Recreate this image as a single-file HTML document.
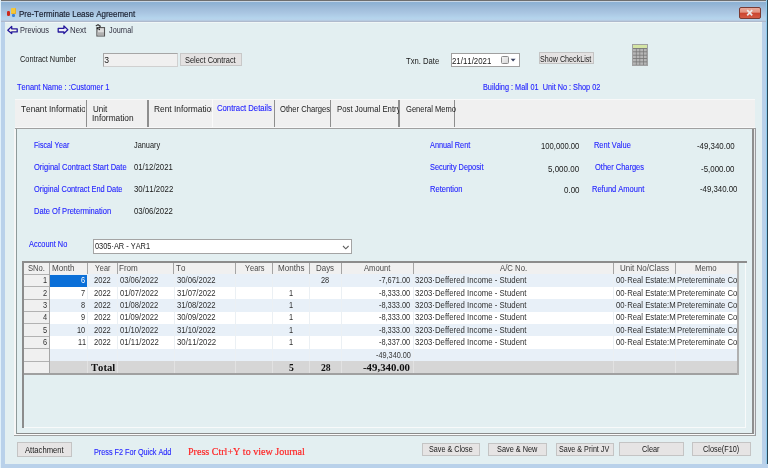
<!DOCTYPE html>
<html><head><meta charset="utf-8"><style>
html,body{margin:0;padding:0;width:768px;height:468px;overflow:hidden;background:#e3eff1}
body{position:relative;font-family:"Liberation Sans",sans-serif;font-variant-ligatures:none;font-kerning:none}
div{box-sizing:border-box}
</style></head><body>
<div style="position:absolute;left:0px;top:0px;width:768px;height:468px;background:#b9d1ea"></div>
<div style="position:absolute;left:0px;top:0px;width:768px;height:1px;background:#6e6e6e"></div>
<div style="position:absolute;left:0px;top:1px;width:768px;height:21px;background:linear-gradient(#c8d6e4 0px,#c8d6e4 1px,#8db1d4 1px,#90b3d4 3px,#9cbad8 6px,#aac6e2 12px,#b4d4ec 17px,#b8d2ea 19px,#b4c2d6 20px,#aab2c4 21px)"></div>
<div style="position:absolute;left:5px;top:22px;width:757px;height:442px;background:#e3eff1"></div>
<div style="position:absolute;left:5px;top:22px;width:757px;height:1px;background:#f0f6f6"></div>
<div style="position:absolute;left:766px;top:0px;width:1px;height:468px;background:#90ccee"></div>
<div style="position:absolute;left:767px;top:0px;width:1px;height:468px;background:#2a4858"></div>
<div style="position:absolute;left:0px;top:464px;width:768px;height:4px;background:#b9d1ea"></div>
<div style="position:absolute;left:0px;top:0px;width:1px;height:468px;background:#e0f0fa"></div>
<div style="position:absolute;left:7px;top:11px;width:3px;height:4.5px;background:#cc2a1c;border-radius:1.2px"></div>
<div style="position:absolute;left:10.5px;top:8.2px;width:5.5px;height:5.6px;background:#f4c83a;border-radius:1px;box-shadow:inset -0.6px -0.6px 0 #e0a020"></div>
<div style="position:absolute;left:11.5px;top:14.3px;width:3.2px;height:2.9px;background:#3a80d8;border-radius:1.2px"></div>
<div style="position:absolute;left:739.2px;top:7px;width:21.6px;height:12px;border:1px solid #7a3a32;border-radius:2px;background:linear-gradient(#eaa898 0%,#e29482 40%,#cc4630 55%,#d45a44 100%)"></div>
<svg style="position:absolute;left:744px;top:8px" width="12" height="10"><path d="M3.2 2.2 L8.2 7.4 M8.2 2.2 L3.2 7.4" stroke="#ece8e8" stroke-width="1.7" stroke-linecap="butt"/></svg>
<svg style="position:absolute;left:4px;top:22px" width="16" height="16"><path d="M3.8 8.2 L7.7 4.4 L7.7 6.8 L13.2 6.8 L13.2 9.9 L7.7 9.9 L7.7 11.6 Z" fill="#f6f6e6" stroke="#24189c" stroke-width="1.3" stroke-linejoin="round"/></svg>
<svg style="position:absolute;left:54px;top:22px" width="16" height="16"><path d="M13.8 7.7 L9.9 3.9 L9.9 6.4 L4.2 6.4 L4.2 10 L9.9 10 L9.9 11.6 Z" fill="#eeeef6" stroke="#24189c" stroke-width="1.3" stroke-linejoin="round"/></svg>
<svg style="position:absolute;left:92px;top:22px" width="16" height="16"><rect x="4.9" y="5.6" width="7.6" height="8.4" fill="#dcdcdc" stroke="#555555" stroke-width="1.1"/><rect x="5.5" y="10.3" width="6.5" height="3.2" fill="#b0b0b0"/><path d="M3.8 4 L6 2.8 L8.8 4.6" fill="none" stroke="#3a3a3a" stroke-width="1.2"/><circle cx="5.6" cy="6.4" r="0.9" fill="#222"/><circle cx="7.4" cy="5.3" r="0.8" fill="#222"/><circle cx="7.3" cy="7.4" r="0.8" fill="#222"/></svg>
<div style="position:absolute;left:103px;top:53px;width:75px;height:14px;background:#f0f0f0;border:1px solid #a6a6a6;border-right-color:#d0d0d0;border-bottom-color:#d0d0d0"></div>
<div style="position:absolute;left:179.6px;top:53.2px;width:62.1px;height:12.5px;background:#e4e2e2;border:1px solid #c8c8c8"></div>
<div style="position:absolute;left:451px;top:53px;width:69px;height:14px;background:#ffffff;border:1px solid #a0a0a0"></div>
<div style="position:absolute;left:501.2px;top:55.7px;width:7.5px;height:8px;background:linear-gradient(135deg,#f4f4f4,#d8d8d8);border:1px solid #8a8a8a;border-radius:1.5px"></div>
<svg style="position:absolute;left:510px;top:57.5px" width="7" height="5"><path d="M0.6 0.8 H5.6 L3.1 3.6 Z" fill="#3a4260"/></svg>
<div style="position:absolute;left:538.6px;top:51.9px;width:55px;height:12.4px;background:#e4e2e2;border:1px solid #c4c4c4"></div>
<svg style="position:absolute;left:632px;top:43.5px" width="16" height="22"><rect x="0.4" y="0.4" width="15.2" height="21.2" fill="#787878" stroke="#a0a0a0" stroke-width="0.8"/><rect x="1" y="1" width="14" height="3" fill="#d4e4a4"/><rect x="1.0" y="4.90" width="2.9" height="2.5" fill="#b6b6b6"/><rect x="4.6" y="4.90" width="2.9" height="2.5" fill="#b6b6b6"/><rect x="8.2" y="4.90" width="2.9" height="2.5" fill="#b6b6b6"/><rect x="11.8" y="4.90" width="2.9" height="2.5" fill="#b6b6b6"/><rect x="1.0" y="8.25" width="2.9" height="2.5" fill="#b6b6b6"/><rect x="4.6" y="8.25" width="2.9" height="2.5" fill="#b6b6b6"/><rect x="8.2" y="8.25" width="2.9" height="2.5" fill="#b6b6b6"/><rect x="11.8" y="8.25" width="2.9" height="2.5" fill="#b6b6b6"/><rect x="1.0" y="11.60" width="2.9" height="2.5" fill="#b6b6b6"/><rect x="4.6" y="11.60" width="2.9" height="2.5" fill="#b6b6b6"/><rect x="8.2" y="11.60" width="2.9" height="2.5" fill="#b6b6b6"/><rect x="11.8" y="11.60" width="2.9" height="2.5" fill="#b6b6b6"/><rect x="1.0" y="14.95" width="2.9" height="2.5" fill="#b6b6b6"/><rect x="4.6" y="14.95" width="2.9" height="2.5" fill="#b6b6b6"/><rect x="8.2" y="14.95" width="2.9" height="2.5" fill="#b6b6b6"/><rect x="11.8" y="14.95" width="2.9" height="2.5" fill="#b6b6b6"/><rect x="1.0" y="18.30" width="2.9" height="2.5" fill="#b6b6b6"/><rect x="4.6" y="18.30" width="2.9" height="2.5" fill="#b6b6b6"/><rect x="8.2" y="18.30" width="2.9" height="2.5" fill="#b6b6b6"/><rect x="11.8" y="18.30" width="2.9" height="2.5" fill="#b6b6b6"/></svg>
<div style="position:absolute;left:14.5px;top:98.5px;width:740px;height:29.5px;background:#f0f0f0"></div>
<div style="position:absolute;left:14.5px;top:98.5px;width:740px;height:1px;background:#f8f8f8"></div>
<div style="position:absolute;left:85.5px;top:99.5px;width:1.3px;height:28px;background:#8e8e8e"></div>
<div style="position:absolute;left:147.3px;top:99.5px;width:1.3px;height:28px;background:#8e8e8e"></div>
<div style="position:absolute;left:274.2px;top:99.5px;width:1.3px;height:28px;background:#8e8e8e"></div>
<div style="position:absolute;left:330.2px;top:99.5px;width:1.3px;height:28px;background:#8e8e8e"></div>
<div style="position:absolute;left:398.3px;top:99.5px;width:1.3px;height:28px;background:#8e8e8e"></div>
<div style="position:absolute;left:453.8px;top:99.5px;width:1.3px;height:28px;background:#8e8e8e"></div>
<div style="position:absolute;left:212px;top:99px;width:1px;height:28px;background:#fafafa"></div>
<div style="position:absolute;left:14.5px;top:126.6px;width:740px;height:1px;background:#f8f8f8"></div>
<div style="position:absolute;left:14.5px;top:127.6px;width:741px;height:1.6px;background:linear-gradient(#909090,#b0b0b0)"></div>
<div style="position:absolute;left:15.6px;top:129px;width:1.3px;height:306px;background:#8e9a9a"></div>
<div style="position:absolute;left:14px;top:129px;width:1.6px;height:306px;background:#f6f6f6"></div>
<div style="position:absolute;left:752px;top:129px;width:1.5px;height:304px;background:#8e8e8e"></div>
<div style="position:absolute;left:753.5px;top:129px;width:1.3px;height:304px;background:#e8e8e8"></div>
<div style="position:absolute;left:754.8px;top:128px;width:1.3px;height:307.5px;background:#9a9a9e"></div>
<div style="position:absolute;left:16.7px;top:432.5px;width:737px;height:1.2px;background:#8a8a8a"></div>
<div style="position:absolute;left:14px;top:435px;width:742px;height:1.3px;background:#a0a0a0"></div>
<div style="position:absolute;left:14px;top:433.8px;width:740px;height:1px;background:#fafafa"></div>
<div style="position:absolute;left:93.3px;top:239.2px;width:258.5px;height:15px;background:#ffffff;border:1px solid #a4a4a4"></div>
<svg style="position:absolute;left:342px;top:244.5px" width="8" height="5"><path d="M1 1 L3.8 3.8 L6.6 1" fill="none" stroke="#606060" stroke-width="1.1"/></svg>
<div style="position:absolute;left:22.3px;top:261.2px;width:723.7px;height:167.10000000000002px;background:#e3eff1;border-right:1px solid #f8fafa;border-bottom:1.2px solid #f8fafa"></div>
<div style="position:absolute;left:22.3px;top:261.2px;width:724.7px;height:1.8px;background:#8c8c8c"></div>
<div style="position:absolute;left:22.3px;top:261.2px;width:1.5px;height:167.10000000000002px;background:#8c8c8c"></div>
<div style="position:absolute;left:23.8px;top:263px;width:713.4000000000001px;height:11.300000000000011px;background:#f0f0f0"></div>
<div style="position:absolute;left:23.8px;top:273.6px;width:713.4000000000001px;height:1.1px;background:#a8a8a8"></div>
<div style="position:absolute;left:49.1px;top:263px;width:1.1px;height:11.300000000000011px;background:#a4a4a4"></div>
<div style="position:absolute;left:86.7px;top:263px;width:1.1px;height:11.300000000000011px;background:#a4a4a4"></div>
<div style="position:absolute;left:116.7px;top:263px;width:1.1px;height:11.300000000000011px;background:#a4a4a4"></div>
<div style="position:absolute;left:173.4px;top:263px;width:1.1px;height:11.300000000000011px;background:#a4a4a4"></div>
<div style="position:absolute;left:234.70000000000002px;top:263px;width:1.1px;height:11.300000000000011px;background:#a4a4a4"></div>
<div style="position:absolute;left:271.9px;top:263px;width:1.1px;height:11.300000000000011px;background:#a4a4a4"></div>
<div style="position:absolute;left:308.7px;top:263px;width:1.1px;height:11.300000000000011px;background:#a4a4a4"></div>
<div style="position:absolute;left:341.29999999999995px;top:263px;width:1.1px;height:11.300000000000011px;background:#a4a4a4"></div>
<div style="position:absolute;left:412.7px;top:263px;width:1.1px;height:11.300000000000011px;background:#a4a4a4"></div>
<div style="position:absolute;left:612.6px;top:263px;width:1.1px;height:11.300000000000011px;background:#a4a4a4"></div>
<div style="position:absolute;left:675.1px;top:263px;width:1.1px;height:11.300000000000011px;background:#a4a4a4"></div>
<div style="position:absolute;left:736.6px;top:263px;width:1.1px;height:11.300000000000011px;background:#a4a4a4"></div>
<div style="position:absolute;left:737.2px;top:263px;width:1.6px;height:111.5px;background:#b0b0b0"></div>
<div style="position:absolute;left:49.7px;top:274.3px;width:687.5px;height:12.42px;background:#e8f0f8"></div>
<div style="position:absolute;left:49.7px;top:286.72px;width:687.5px;height:12.42px;background:#ffffff"></div>
<div style="position:absolute;left:49.7px;top:299.14px;width:687.5px;height:12.42px;background:#e8f0f8"></div>
<div style="position:absolute;left:49.7px;top:311.56px;width:687.5px;height:12.42px;background:#ffffff"></div>
<div style="position:absolute;left:49.7px;top:323.98px;width:687.5px;height:12.42px;background:#e8f0f8"></div>
<div style="position:absolute;left:49.7px;top:336.40000000000003px;width:687.5px;height:12.42px;background:#ffffff"></div>
<div style="position:absolute;left:49.7px;top:348.82px;width:687.5px;height:12.42px;background:#e8f0f8"></div>
<div style="position:absolute;left:86.8px;top:274.3px;width:1px;height:86.94px;background:#ebf0f4"></div>
<div style="position:absolute;left:116.8px;top:274.3px;width:1px;height:86.94px;background:#ebf0f4"></div>
<div style="position:absolute;left:173.5px;top:274.3px;width:1px;height:86.94px;background:#ebf0f4"></div>
<div style="position:absolute;left:234.8px;top:274.3px;width:1px;height:86.94px;background:#ebf0f4"></div>
<div style="position:absolute;left:272.0px;top:274.3px;width:1px;height:86.94px;background:#ebf0f4"></div>
<div style="position:absolute;left:308.8px;top:274.3px;width:1px;height:86.94px;background:#ebf0f4"></div>
<div style="position:absolute;left:341.4px;top:274.3px;width:1px;height:86.94px;background:#ebf0f4"></div>
<div style="position:absolute;left:412.8px;top:274.3px;width:1px;height:86.94px;background:#ebf0f4"></div>
<div style="position:absolute;left:612.7px;top:274.3px;width:1px;height:86.94px;background:#ebf0f4"></div>
<div style="position:absolute;left:675.2px;top:274.3px;width:1px;height:86.94px;background:#ebf0f4"></div>
<div style="position:absolute;left:49.7px;top:361.24px;width:687.5px;height:12.360000000000014px;background:#d6d6d6"></div>
<div style="position:absolute;left:86.8px;top:361.24px;width:1px;height:12.360000000000014px;background:#e2e2e2"></div>
<div style="position:absolute;left:116.8px;top:361.24px;width:1px;height:12.360000000000014px;background:#e2e2e2"></div>
<div style="position:absolute;left:173.5px;top:361.24px;width:1px;height:12.360000000000014px;background:#e2e2e2"></div>
<div style="position:absolute;left:234.8px;top:361.24px;width:1px;height:12.360000000000014px;background:#e2e2e2"></div>
<div style="position:absolute;left:272.0px;top:361.24px;width:1px;height:12.360000000000014px;background:#e2e2e2"></div>
<div style="position:absolute;left:308.8px;top:361.24px;width:1px;height:12.360000000000014px;background:#e2e2e2"></div>
<div style="position:absolute;left:341.4px;top:361.24px;width:1px;height:12.360000000000014px;background:#e2e2e2"></div>
<div style="position:absolute;left:412.8px;top:361.24px;width:1px;height:12.360000000000014px;background:#e2e2e2"></div>
<div style="position:absolute;left:612.7px;top:361.24px;width:1px;height:12.360000000000014px;background:#e2e2e2"></div>
<div style="position:absolute;left:675.2px;top:361.24px;width:1px;height:12.360000000000014px;background:#e2e2e2"></div>
<div style="position:absolute;left:23.5px;top:274.3px;width:26.200000000000003px;height:99.30000000000001px;background:#f0f0f0"></div>
<div style="position:absolute;left:23.5px;top:273.7px;width:26.200000000000003px;height:1.1px;background:#b2b2b2"></div>
<div style="position:absolute;left:23.5px;top:286.12px;width:26.200000000000003px;height:1.1px;background:#b2b2b2"></div>
<div style="position:absolute;left:23.5px;top:298.53999999999996px;width:26.200000000000003px;height:1.1px;background:#b2b2b2"></div>
<div style="position:absolute;left:23.5px;top:310.96px;width:26.200000000000003px;height:1.1px;background:#b2b2b2"></div>
<div style="position:absolute;left:23.5px;top:323.38px;width:26.200000000000003px;height:1.1px;background:#b2b2b2"></div>
<div style="position:absolute;left:23.5px;top:335.8px;width:26.200000000000003px;height:1.1px;background:#b2b2b2"></div>
<div style="position:absolute;left:23.5px;top:348.21999999999997px;width:26.200000000000003px;height:1.1px;background:#b2b2b2"></div>
<div style="position:absolute;left:23.5px;top:360.64px;width:26.200000000000003px;height:1.1px;background:#b2b2b2"></div>
<div style="position:absolute;left:23.5px;top:373.06px;width:26.200000000000003px;height:1.1px;background:#b2b2b2"></div>
<div style="position:absolute;left:48.6px;top:263px;width:1.3px;height:110.60000000000002px;background:#a6a6a6"></div>
<div style="position:absolute;left:23.5px;top:373.2px;width:713.7px;height:1.4px;background:#a0a0a0"></div>
<div style="position:absolute;left:50px;top:274.8px;width:37.1px;height:11.8px;background:#0a6fd8"></div>
<div style="position:absolute;left:17.3px;top:442.3px;width:55.2px;height:15.199999999999989px;background:#e6e4e4;border:1px solid #c4c4c4"></div>
<div style="position:absolute;left:421.8px;top:442.7px;width:58.69999999999999px;height:13.300000000000011px;background:#e6e4e4;border:1px solid #c4c4c4"></div>
<div style="position:absolute;left:487.9px;top:442.7px;width:58.80000000000007px;height:13.300000000000011px;background:#e6e4e4;border:1px solid #c4c4c4"></div>
<div style="position:absolute;left:555.5px;top:442.7px;width:58.5px;height:13.300000000000011px;background:#e6e4e4;border:1px solid #c4c4c4"></div>
<div style="position:absolute;left:619.4px;top:442.4px;width:64.39999999999998px;height:13.600000000000023px;background:#e6e4e4;border:1px solid #c4c4c4"></div>
<div style="position:absolute;left:692px;top:441.9px;width:58.799999999999955px;height:13.900000000000034px;background:#e6e4e4;border:1px solid #c4c4c4"></div>
<div style="position:absolute;left:0;top:0;width:768px;height:468px;will-change:transform">
<div style="position:absolute;left:19.61px;top:26.00px;font:normal 8.6px/8.6px 'Liberation Sans',serif;color:#303040;white-space:pre;font-variant-ligatures:none;font-kerning:none;;transform:scaleX(0.8643);transform-origin:0 0">Previous</div>
<div style="position:absolute;left:70.37px;top:26.00px;font:normal 8.6px/8.6px 'Liberation Sans',serif;color:#303040;white-space:pre;font-variant-ligatures:none;font-kerning:none;;transform:scaleX(0.9169);transform-origin:0 0">Next</div>
<div style="position:absolute;left:109.33px;top:26.00px;font:normal 8.6px/8.6px 'Liberation Sans',serif;color:#303040;white-space:pre;font-variant-ligatures:none;font-kerning:none;;transform:scaleX(0.8446);transform-origin:0 0">Journal</div>
<div style="position:absolute;left:19.36px;top:9.00px;font:normal 9.4px/9.4px 'Liberation Sans',serif;color:#1a2030;white-space:pre;font-variant-ligatures:none;font-kerning:none;-webkit-text-stroke:0.2px #1a2030;transform:scaleX(0.8511);transform-origin:0 0">Pre-Terminate Lease Agreement</div>
<div style="position:absolute;left:19.93px;top:55.00px;font:normal 8.6px/8.6px 'Liberation Sans',serif;color:#202020;white-space:pre;font-variant-ligatures:none;font-kerning:none;;transform:scaleX(0.8562);transform-origin:0 0">Contract Number</div>
<div style="position:absolute;left:104.34px;top:56.00px;font:normal 8.6px/8.6px 'Liberation Sans',serif;color:#202020;white-space:pre;font-variant-ligatures:none;font-kerning:none;;transform:scaleX(1.0000);transform-origin:0 0">3</div>
<div style="position:absolute;left:184.50px;top:56.00px;font:normal 8.6px/8.6px 'Liberation Sans',serif;color:#202020;white-space:pre;font-variant-ligatures:none;font-kerning:none;;transform:scaleX(0.8620);transform-origin:0 0">Select Contract</div>
<div style="position:absolute;left:406.05px;top:57.00px;font:normal 8.6px/8.6px 'Liberation Sans',serif;color:#202020;white-space:pre;font-variant-ligatures:none;font-kerning:none;;transform:scaleX(0.8914);transform-origin:0 0">Txn. Date</div>
<div style="position:absolute;left:452.21px;top:57.00px;font:normal 8.6px/8.6px 'Liberation Sans',serif;color:#202020;white-space:pre;font-variant-ligatures:none;font-kerning:none;;transform:scaleX(0.9140);transform-origin:0 0">21/11/2021</div>
<div style="position:absolute;left:540.31px;top:55.00px;font:normal 8.6px/8.6px 'Liberation Sans',serif;color:#202020;white-space:pre;font-variant-ligatures:none;font-kerning:none;;transform:scaleX(0.8331);transform-origin:0 0">Show CheckList</div>
<div style="position:absolute;left:17.35px;top:83.00px;font:normal 8.6px/8.6px 'Liberation Sans',serif;color:#2424ff;white-space:pre;font-variant-ligatures:none;font-kerning:none;-webkit-text-stroke:0.12px #2424ff;;transform:scaleX(0.8725);transform-origin:0 0">Tenant Name : :Customer 1</div>
<div style="position:absolute;left:482.92px;top:83.00px;font:normal 8.6px/8.6px 'Liberation Sans',serif;color:#2424ff;white-space:pre;font-variant-ligatures:none;font-kerning:none;-webkit-text-stroke:0.12px #2424ff;;transform:scaleX(0.8499);transform-origin:0 0">Building : Mall 01  Unit No : Shop 02</div>
<div style="position:absolute;left:15px;top:0;width:70.2px;height:468px;overflow:hidden"><div style="position:absolute;left:-15px;top:0"><div style="position:absolute;left:20.83px;top:105.00px;font:normal 8.6px/8.6px 'Liberation Sans',serif;color:#202020;white-space:pre;font-variant-ligatures:none;font-kerning:none;;transform:scaleX(0.9626);transform-origin:0 0">Tenant Information</div></div></div>
<div style="position:absolute;left:92.64px;top:105.00px;font:normal 8.6px/8.6px 'Liberation Sans',serif;color:#202020;white-space:pre;font-variant-ligatures:none;font-kerning:none;;transform:scaleX(0.9313);transform-origin:0 0">Unit</div>
<div style="position:absolute;left:92.45px;top:114.00px;font:normal 8.6px/8.6px 'Liberation Sans',serif;color:#202020;white-space:pre;font-variant-ligatures:none;font-kerning:none;;transform:scaleX(0.9673);transform-origin:0 0">Information</div>
<div style="position:absolute;left:149px;top:0;width:63px;height:468px;overflow:hidden"><div style="position:absolute;left:-149px;top:0"><div style="position:absolute;left:153.93px;top:105.00px;font:normal 8.6px/8.6px 'Liberation Sans',serif;color:#202020;white-space:pre;font-variant-ligatures:none;font-kerning:none;;transform:scaleX(0.9741);transform-origin:0 0">Rent Information</div></div></div>
<div style="position:absolute;left:216.51px;top:104.00px;font:normal 8.6px/8.6px 'Liberation Sans',serif;color:#2424ff;white-space:pre;font-variant-ligatures:none;font-kerning:none;-webkit-text-stroke:0.12px #2424ff;;transform:scaleX(0.8977);transform-origin:0 0">Contract Details</div>
<div style="position:absolute;left:280.09px;top:105.00px;font:normal 8.6px/8.6px 'Liberation Sans',serif;color:#202020;white-space:pre;font-variant-ligatures:none;font-kerning:none;;transform:scaleX(0.8871);transform-origin:0 0">Other Charges</div>
<div style="position:absolute;left:332px;top:0;width:66.60000000000002px;height:468px;overflow:hidden"><div style="position:absolute;left:-332px;top:0"><div style="position:absolute;left:337.08px;top:105.00px;font:normal 8.6px/8.6px 'Liberation Sans',serif;color:#202020;white-space:pre;font-variant-ligatures:none;font-kerning:none;;transform:scaleX(0.9054);transform-origin:0 0">Post Journal Entry</div></div></div>
<div style="position:absolute;left:406.22px;top:105.00px;font:normal 8.6px/8.6px 'Liberation Sans',serif;color:#202020;white-space:pre;font-variant-ligatures:none;font-kerning:none;;transform:scaleX(0.8800);transform-origin:0 0">General Memo</div>
<div style="position:absolute;left:34.44px;top:141.00px;font:normal 8.6px/8.6px 'Liberation Sans',serif;color:#2424ff;white-space:pre;font-variant-ligatures:none;font-kerning:none;-webkit-text-stroke:0.12px #2424ff;;transform:scaleX(0.8208);transform-origin:0 0">Fiscal Year</div>
<div style="position:absolute;left:34.30px;top:163.00px;font:normal 8.6px/8.6px 'Liberation Sans',serif;color:#2424ff;white-space:pre;font-variant-ligatures:none;font-kerning:none;-webkit-text-stroke:0.12px #2424ff;;transform:scaleX(0.8773);transform-origin:0 0">Original Contract Start Date</div>
<div style="position:absolute;left:34.30px;top:185.00px;font:normal 8.6px/8.6px 'Liberation Sans',serif;color:#2424ff;white-space:pre;font-variant-ligatures:none;font-kerning:none;-webkit-text-stroke:0.12px #2424ff;;transform:scaleX(0.8608);transform-origin:0 0">Original Contract End Date</div>
<div style="position:absolute;left:34.00px;top:207.00px;font:normal 8.6px/8.6px 'Liberation Sans',serif;color:#2424ff;white-space:pre;font-variant-ligatures:none;font-kerning:none;-webkit-text-stroke:0.12px #2424ff;;transform:scaleX(0.8781);transform-origin:0 0">Date Of Pretermination</div>
<div style="position:absolute;left:133.83px;top:141.00px;font:normal 8.6px/8.6px 'Liberation Sans',serif;color:#202020;white-space:pre;font-variant-ligatures:none;font-kerning:none;;transform:scaleX(0.8555);transform-origin:0 0">January</div>
<div style="position:absolute;left:133.67px;top:163.00px;font:normal 8.6px/8.6px 'Liberation Sans',serif;color:#202020;white-space:pre;font-variant-ligatures:none;font-kerning:none;;transform:scaleX(0.9012);transform-origin:0 0">01/12/2021</div>
<div style="position:absolute;left:133.66px;top:185.00px;font:normal 8.6px/8.6px 'Liberation Sans',serif;color:#202020;white-space:pre;font-variant-ligatures:none;font-kerning:none;;transform:scaleX(0.9150);transform-origin:0 0">30/11/2022</div>
<div style="position:absolute;left:133.67px;top:207.00px;font:normal 8.6px/8.6px 'Liberation Sans',serif;color:#202020;white-space:pre;font-variant-ligatures:none;font-kerning:none;;transform:scaleX(0.9012);transform-origin:0 0">03/06/2022</div>
<div style="position:absolute;left:430.20px;top:141.00px;font:normal 8.6px/8.6px 'Liberation Sans',serif;color:#2424ff;white-space:pre;font-variant-ligatures:none;font-kerning:none;-webkit-text-stroke:0.12px #2424ff;;transform:scaleX(0.8511);transform-origin:0 0">Annual Rent</div>
<div style="position:absolute;left:429.91px;top:163.00px;font:normal 8.6px/8.6px 'Liberation Sans',serif;color:#2424ff;white-space:pre;font-variant-ligatures:none;font-kerning:none;-webkit-text-stroke:0.12px #2424ff;;transform:scaleX(0.8557);transform-origin:0 0">Security Deposit</div>
<div style="position:absolute;left:429.59px;top:185.00px;font:normal 8.6px/8.6px 'Liberation Sans',serif;color:#2424ff;white-space:pre;font-variant-ligatures:none;font-kerning:none;-webkit-text-stroke:0.12px #2424ff;;transform:scaleX(0.8809);transform-origin:0 0">Retention</div>
<div style="position:absolute;left:540.76px;top:142.00px;font:normal 8.6px/8.6px 'Liberation Sans',serif;color:#202020;white-space:pre;font-variant-ligatures:none;font-kerning:none;;transform:scaleX(0.8925);transform-origin:0 0">100,000.00</div>
<div style="position:absolute;left:548.08px;top:165.00px;font:normal 8.6px/8.6px 'Liberation Sans',serif;color:#202020;white-space:pre;font-variant-ligatures:none;font-kerning:none;;transform:scaleX(0.9293);transform-origin:0 0">5,000.00</div>
<div style="position:absolute;left:563.66px;top:186.00px;font:normal 8.6px/8.6px 'Liberation Sans',serif;color:#202020;white-space:pre;font-variant-ligatures:none;font-kerning:none;;transform:scaleX(0.9277);transform-origin:0 0">0.00</div>
<div style="position:absolute;left:593.80px;top:141.00px;font:normal 8.6px/8.6px 'Liberation Sans',serif;color:#2424ff;white-space:pre;font-variant-ligatures:none;font-kerning:none;-webkit-text-stroke:0.12px #2424ff;;transform:scaleX(0.8652);transform-origin:0 0">Rent Value</div>
<div style="position:absolute;left:594.50px;top:163.00px;font:normal 8.6px/8.6px 'Liberation Sans',serif;color:#2424ff;white-space:pre;font-variant-ligatures:none;font-kerning:none;-webkit-text-stroke:0.12px #2424ff;;transform:scaleX(0.8691);transform-origin:0 0">Other Charges</div>
<div style="position:absolute;left:592.10px;top:185.00px;font:normal 8.6px/8.6px 'Liberation Sans',serif;color:#2424ff;white-space:pre;font-variant-ligatures:none;font-kerning:none;-webkit-text-stroke:0.12px #2424ff;;transform:scaleX(0.8749);transform-origin:0 0">Refund Amount</div>
<div style="position:absolute;left:697.18px;top:142.00px;font:normal 8.6px/8.6px 'Liberation Sans',serif;color:#202020;white-space:pre;font-variant-ligatures:none;font-kerning:none;;transform:scaleX(0.9168);transform-origin:0 0">-49,340.00</div>
<div style="position:absolute;left:701.38px;top:165.00px;font:normal 8.6px/8.6px 'Liberation Sans',serif;color:#202020;white-space:pre;font-variant-ligatures:none;font-kerning:none;;transform:scaleX(0.9220);transform-origin:0 0">-5,000.00</div>
<div style="position:absolute;left:700.29px;top:185.00px;font:normal 8.6px/8.6px 'Liberation Sans',serif;color:#202020;white-space:pre;font-variant-ligatures:none;font-kerning:none;;transform:scaleX(0.9118);transform-origin:0 0">-49,340.00</div>
<div style="position:absolute;left:29.00px;top:240.00px;font:normal 8.6px/8.6px 'Liberation Sans',serif;color:#2424ff;white-space:pre;font-variant-ligatures:none;font-kerning:none;-webkit-text-stroke:0.12px #2424ff;;transform:scaleX(0.8608);transform-origin:0 0">Account No</div>
<div style="position:absolute;left:94.98px;top:242.00px;font:normal 8.6px/8.6px 'Liberation Sans',serif;color:#202020;white-space:pre;font-variant-ligatures:none;font-kerning:none;;transform:scaleX(0.8600);transform-origin:0 0">0305·AR - YAR1</div>
<div style="position:absolute;left:28.09px;top:264.00px;font:normal 8.6px/8.6px 'Liberation Sans',serif;color:#4a4a4a;white-space:pre;font-variant-ligatures:none;font-kerning:none;;transform:scaleX(0.8879);transform-origin:0 0">SNo.</div>
<div style="position:absolute;left:51.85px;top:264.00px;font:normal 8.6px/8.6px 'Liberation Sans',serif;color:#4a4a4a;white-space:pre;font-variant-ligatures:none;font-kerning:none;;transform:scaleX(0.9458);transform-origin:0 0">Month</div>
<div style="position:absolute;left:94.85px;top:264.00px;font:normal 8.6px/8.6px 'Liberation Sans',serif;color:#4a4a4a;white-space:pre;font-variant-ligatures:none;font-kerning:none;;transform:scaleX(0.8483);transform-origin:0 0">Year</div>
<div style="position:absolute;left:119.15px;top:264.00px;font:normal 8.6px/8.6px 'Liberation Sans',serif;color:#4a4a4a;white-space:pre;font-variant-ligatures:none;font-kerning:none;;transform:scaleX(0.9398);transform-origin:0 0">From</div>
<div style="position:absolute;left:176.34px;top:264.00px;font:normal 8.6px/8.6px 'Liberation Sans',serif;color:#4a4a4a;white-space:pre;font-variant-ligatures:none;font-kerning:none;;transform:scaleX(0.9302);transform-origin:0 0">To</div>
<div style="position:absolute;left:244.75px;top:264.00px;font:normal 8.6px/8.6px 'Liberation Sans',serif;color:#4a4a4a;white-space:pre;font-variant-ligatures:none;font-kerning:none;;transform:scaleX(0.8707);transform-origin:0 0">Years</div>
<div style="position:absolute;left:277.75px;top:264.00px;font:normal 8.6px/8.6px 'Liberation Sans',serif;color:#4a4a4a;white-space:pre;font-variant-ligatures:none;font-kerning:none;;transform:scaleX(0.9429);transform-origin:0 0">Months</div>
<div style="position:absolute;left:315.87px;top:264.00px;font:normal 8.6px/8.6px 'Liberation Sans',serif;color:#4a4a4a;white-space:pre;font-variant-ligatures:none;font-kerning:none;;transform:scaleX(0.9224);transform-origin:0 0">Days</div>
<div style="position:absolute;left:364.30px;top:264.00px;font:normal 8.6px/8.6px 'Liberation Sans',serif;color:#4a4a4a;white-space:pre;font-variant-ligatures:none;font-kerning:none;;transform:scaleX(0.8902);transform-origin:0 0">Amount</div>
<div style="position:absolute;left:500.30px;top:264.00px;font:normal 8.6px/8.6px 'Liberation Sans',serif;color:#4a4a4a;white-space:pre;font-variant-ligatures:none;font-kerning:none;;transform:scaleX(0.9028);transform-origin:0 0">A/C No.</div>
<div style="position:absolute;left:620.04px;top:264.00px;font:normal 8.6px/8.6px 'Liberation Sans',serif;color:#4a4a4a;white-space:pre;font-variant-ligatures:none;font-kerning:none;;transform:scaleX(0.9321);transform-origin:0 0">Unit No/Class</div>
<div style="position:absolute;left:695.37px;top:264.00px;font:normal 8.6px/8.6px 'Liberation Sans',serif;color:#4a4a4a;white-space:pre;font-variant-ligatures:none;font-kerning:none;;transform:scaleX(0.9085);transform-origin:0 0">Memo</div>
<div style="position:absolute;left:43.23px;top:276.00px;font:normal 8.6px/8.6px 'Liberation Sans',serif;color:#303030;white-space:pre;font-variant-ligatures:none;font-kerning:none;;transform:scaleX(0.8600);transform-origin:0 0">1</div>
<div style="position:absolute;left:81.35px;top:276.00px;font:normal 8.6px/8.6px 'Liberation Sans',serif;color:#ffffff;white-space:pre;font-variant-ligatures:none;font-kerning:none;;transform:scaleX(0.8600);transform-origin:0 0">6</div>
<div style="position:absolute;left:93.82px;top:276.00px;font:normal 8.6px/8.6px 'Liberation Sans',serif;color:#303030;white-space:pre;font-variant-ligatures:none;font-kerning:none;;transform:scaleX(0.8796);transform-origin:0 0">2022</div>
<div style="position:absolute;left:119.77px;top:276.00px;font:normal 8.6px/8.6px 'Liberation Sans',serif;color:#303030;white-space:pre;font-variant-ligatures:none;font-kerning:none;;transform:scaleX(0.8871);transform-origin:0 0">03/06/2022</div>
<div style="position:absolute;left:177.27px;top:276.00px;font:normal 8.6px/8.6px 'Liberation Sans',serif;color:#303030;white-space:pre;font-variant-ligatures:none;font-kerning:none;;transform:scaleX(0.8965);transform-origin:0 0">30/06/2022</div>
<div style="position:absolute;left:320.84px;top:276.00px;font:normal 8.6px/8.6px 'Liberation Sans',serif;color:#303030;white-space:pre;font-variant-ligatures:none;font-kerning:none;;transform:scaleX(0.8600);transform-origin:0 0">28</div>
<div style="position:absolute;left:379.21px;top:276.00px;font:normal 8.6px/8.6px 'Liberation Sans',serif;color:#303030;white-space:pre;font-variant-ligatures:none;font-kerning:none;;transform:scaleX(0.8600);transform-origin:0 0">-7,671.00</div>
<div style="position:absolute;left:415.37px;top:276.00px;font:normal 8.6px/8.6px 'Liberation Sans',serif;color:#303030;white-space:pre;font-variant-ligatures:none;font-kerning:none;;transform:scaleX(0.9080);transform-origin:0 0">3203·Deffered Income - Student</div>
<div style="position:absolute;left:614px;top:0;width:61.60000000000002px;height:468px;overflow:hidden"><div style="position:absolute;left:-614px;top:0"><div style="position:absolute;left:615.97px;top:276.00px;font:normal 8.6px/8.6px 'Liberation Sans',serif;color:#303030;white-space:pre;font-variant-ligatures:none;font-kerning:none;;transform:scaleX(0.8970);transform-origin:0 0">00·Real Estate:Main</div></div></div>
<div style="position:absolute;left:676px;top:0;width:61px;height:468px;overflow:hidden"><div style="position:absolute;left:-676px;top:0"><div style="position:absolute;left:677.38px;top:276.00px;font:normal 8.6px/8.6px 'Liberation Sans',serif;color:#303030;white-space:pre;font-variant-ligatures:none;font-kerning:none;;transform:scaleX(0.8954);transform-origin:0 0">Pretereminate Contract</div></div></div>
<div style="position:absolute;left:43.23px;top:289.00px;font:normal 8.6px/8.6px 'Liberation Sans',serif;color:#303030;white-space:pre;font-variant-ligatures:none;font-kerning:none;;transform:scaleX(0.8600);transform-origin:0 0">2</div>
<div style="position:absolute;left:81.43px;top:289.00px;font:normal 8.6px/8.6px 'Liberation Sans',serif;color:#303030;white-space:pre;font-variant-ligatures:none;font-kerning:none;;transform:scaleX(0.8600);transform-origin:0 0">7</div>
<div style="position:absolute;left:93.82px;top:289.00px;font:normal 8.6px/8.6px 'Liberation Sans',serif;color:#303030;white-space:pre;font-variant-ligatures:none;font-kerning:none;;transform:scaleX(0.8796);transform-origin:0 0">2022</div>
<div style="position:absolute;left:119.77px;top:289.00px;font:normal 8.6px/8.6px 'Liberation Sans',serif;color:#303030;white-space:pre;font-variant-ligatures:none;font-kerning:none;;transform:scaleX(0.8871);transform-origin:0 0">01/07/2022</div>
<div style="position:absolute;left:177.27px;top:289.00px;font:normal 8.6px/8.6px 'Liberation Sans',serif;color:#303030;white-space:pre;font-variant-ligatures:none;font-kerning:none;;transform:scaleX(0.8965);transform-origin:0 0">31/07/2022</div>
<div style="position:absolute;left:288.66px;top:289.00px;font:normal 8.6px/8.6px 'Liberation Sans',serif;color:#303030;white-space:pre;font-variant-ligatures:none;font-kerning:none;;transform:scaleX(0.8600);transform-origin:0 0">1</div>
<div style="position:absolute;left:379.21px;top:289.00px;font:normal 8.6px/8.6px 'Liberation Sans',serif;color:#303030;white-space:pre;font-variant-ligatures:none;font-kerning:none;;transform:scaleX(0.8600);transform-origin:0 0">-8,333.00</div>
<div style="position:absolute;left:415.37px;top:289.00px;font:normal 8.6px/8.6px 'Liberation Sans',serif;color:#303030;white-space:pre;font-variant-ligatures:none;font-kerning:none;;transform:scaleX(0.9080);transform-origin:0 0">3203·Deffered Income - Student</div>
<div style="position:absolute;left:614px;top:0;width:61.60000000000002px;height:468px;overflow:hidden"><div style="position:absolute;left:-614px;top:0"><div style="position:absolute;left:615.97px;top:289.00px;font:normal 8.6px/8.6px 'Liberation Sans',serif;color:#303030;white-space:pre;font-variant-ligatures:none;font-kerning:none;;transform:scaleX(0.8970);transform-origin:0 0">00·Real Estate:Main</div></div></div>
<div style="position:absolute;left:676px;top:0;width:61px;height:468px;overflow:hidden"><div style="position:absolute;left:-676px;top:0"><div style="position:absolute;left:677.38px;top:289.00px;font:normal 8.6px/8.6px 'Liberation Sans',serif;color:#303030;white-space:pre;font-variant-ligatures:none;font-kerning:none;;transform:scaleX(0.8954);transform-origin:0 0">Pretereminate Contract</div></div></div>
<div style="position:absolute;left:43.15px;top:301.00px;font:normal 8.6px/8.6px 'Liberation Sans',serif;color:#303030;white-space:pre;font-variant-ligatures:none;font-kerning:none;;transform:scaleX(0.8600);transform-origin:0 0">3</div>
<div style="position:absolute;left:81.35px;top:301.00px;font:normal 8.6px/8.6px 'Liberation Sans',serif;color:#303030;white-space:pre;font-variant-ligatures:none;font-kerning:none;;transform:scaleX(0.8600);transform-origin:0 0">8</div>
<div style="position:absolute;left:93.82px;top:301.00px;font:normal 8.6px/8.6px 'Liberation Sans',serif;color:#303030;white-space:pre;font-variant-ligatures:none;font-kerning:none;;transform:scaleX(0.8796);transform-origin:0 0">2022</div>
<div style="position:absolute;left:119.77px;top:301.00px;font:normal 8.6px/8.6px 'Liberation Sans',serif;color:#303030;white-space:pre;font-variant-ligatures:none;font-kerning:none;;transform:scaleX(0.8871);transform-origin:0 0">01/08/2022</div>
<div style="position:absolute;left:177.27px;top:301.00px;font:normal 8.6px/8.6px 'Liberation Sans',serif;color:#303030;white-space:pre;font-variant-ligatures:none;font-kerning:none;;transform:scaleX(0.8965);transform-origin:0 0">31/08/2022</div>
<div style="position:absolute;left:288.66px;top:301.00px;font:normal 8.6px/8.6px 'Liberation Sans',serif;color:#303030;white-space:pre;font-variant-ligatures:none;font-kerning:none;;transform:scaleX(0.8600);transform-origin:0 0">1</div>
<div style="position:absolute;left:379.21px;top:301.00px;font:normal 8.6px/8.6px 'Liberation Sans',serif;color:#303030;white-space:pre;font-variant-ligatures:none;font-kerning:none;;transform:scaleX(0.8600);transform-origin:0 0">-8,333.00</div>
<div style="position:absolute;left:415.37px;top:301.00px;font:normal 8.6px/8.6px 'Liberation Sans',serif;color:#303030;white-space:pre;font-variant-ligatures:none;font-kerning:none;;transform:scaleX(0.9080);transform-origin:0 0">3203·Deffered Income - Student</div>
<div style="position:absolute;left:614px;top:0;width:61.60000000000002px;height:468px;overflow:hidden"><div style="position:absolute;left:-614px;top:0"><div style="position:absolute;left:615.97px;top:301.00px;font:normal 8.6px/8.6px 'Liberation Sans',serif;color:#303030;white-space:pre;font-variant-ligatures:none;font-kerning:none;;transform:scaleX(0.8970);transform-origin:0 0">00·Real Estate:Main</div></div></div>
<div style="position:absolute;left:676px;top:0;width:61px;height:468px;overflow:hidden"><div style="position:absolute;left:-676px;top:0"><div style="position:absolute;left:677.38px;top:301.00px;font:normal 8.6px/8.6px 'Liberation Sans',serif;color:#303030;white-space:pre;font-variant-ligatures:none;font-kerning:none;;transform:scaleX(0.8954);transform-origin:0 0">Pretereminate Contract</div></div></div>
<div style="position:absolute;left:43.08px;top:313.00px;font:normal 8.6px/8.6px 'Liberation Sans',serif;color:#303030;white-space:pre;font-variant-ligatures:none;font-kerning:none;;transform:scaleX(0.8600);transform-origin:0 0">4</div>
<div style="position:absolute;left:81.43px;top:313.00px;font:normal 8.6px/8.6px 'Liberation Sans',serif;color:#303030;white-space:pre;font-variant-ligatures:none;font-kerning:none;;transform:scaleX(0.8600);transform-origin:0 0">9</div>
<div style="position:absolute;left:93.82px;top:313.00px;font:normal 8.6px/8.6px 'Liberation Sans',serif;color:#303030;white-space:pre;font-variant-ligatures:none;font-kerning:none;;transform:scaleX(0.8796);transform-origin:0 0">2022</div>
<div style="position:absolute;left:119.77px;top:313.00px;font:normal 8.6px/8.6px 'Liberation Sans',serif;color:#303030;white-space:pre;font-variant-ligatures:none;font-kerning:none;;transform:scaleX(0.8871);transform-origin:0 0">01/09/2022</div>
<div style="position:absolute;left:177.27px;top:313.00px;font:normal 8.6px/8.6px 'Liberation Sans',serif;color:#303030;white-space:pre;font-variant-ligatures:none;font-kerning:none;;transform:scaleX(0.8965);transform-origin:0 0">30/09/2022</div>
<div style="position:absolute;left:288.66px;top:313.00px;font:normal 8.6px/8.6px 'Liberation Sans',serif;color:#303030;white-space:pre;font-variant-ligatures:none;font-kerning:none;;transform:scaleX(0.8600);transform-origin:0 0">1</div>
<div style="position:absolute;left:379.21px;top:313.00px;font:normal 8.6px/8.6px 'Liberation Sans',serif;color:#303030;white-space:pre;font-variant-ligatures:none;font-kerning:none;;transform:scaleX(0.8600);transform-origin:0 0">-8,333.00</div>
<div style="position:absolute;left:415.37px;top:313.00px;font:normal 8.6px/8.6px 'Liberation Sans',serif;color:#303030;white-space:pre;font-variant-ligatures:none;font-kerning:none;;transform:scaleX(0.9080);transform-origin:0 0">3203·Deffered Income - Student</div>
<div style="position:absolute;left:614px;top:0;width:61.60000000000002px;height:468px;overflow:hidden"><div style="position:absolute;left:-614px;top:0"><div style="position:absolute;left:615.97px;top:313.00px;font:normal 8.6px/8.6px 'Liberation Sans',serif;color:#303030;white-space:pre;font-variant-ligatures:none;font-kerning:none;;transform:scaleX(0.8970);transform-origin:0 0">00·Real Estate:Main</div></div></div>
<div style="position:absolute;left:676px;top:0;width:61px;height:468px;overflow:hidden"><div style="position:absolute;left:-676px;top:0"><div style="position:absolute;left:677.38px;top:313.00px;font:normal 8.6px/8.6px 'Liberation Sans',serif;color:#303030;white-space:pre;font-variant-ligatures:none;font-kerning:none;;transform:scaleX(0.8954);transform-origin:0 0">Pretereminate Contract</div></div></div>
<div style="position:absolute;left:43.15px;top:326.00px;font:normal 8.6px/8.6px 'Liberation Sans',serif;color:#303030;white-space:pre;font-variant-ligatures:none;font-kerning:none;;transform:scaleX(0.8600);transform-origin:0 0">5</div>
<div style="position:absolute;left:77.24px;top:326.00px;font:normal 8.6px/8.6px 'Liberation Sans',serif;color:#303030;white-space:pre;font-variant-ligatures:none;font-kerning:none;;transform:scaleX(0.8600);transform-origin:0 0">10</div>
<div style="position:absolute;left:93.82px;top:326.00px;font:normal 8.6px/8.6px 'Liberation Sans',serif;color:#303030;white-space:pre;font-variant-ligatures:none;font-kerning:none;;transform:scaleX(0.8796);transform-origin:0 0">2022</div>
<div style="position:absolute;left:119.77px;top:326.00px;font:normal 8.6px/8.6px 'Liberation Sans',serif;color:#303030;white-space:pre;font-variant-ligatures:none;font-kerning:none;;transform:scaleX(0.8871);transform-origin:0 0">01/10/2022</div>
<div style="position:absolute;left:177.27px;top:326.00px;font:normal 8.6px/8.6px 'Liberation Sans',serif;color:#303030;white-space:pre;font-variant-ligatures:none;font-kerning:none;;transform:scaleX(0.8965);transform-origin:0 0">31/10/2022</div>
<div style="position:absolute;left:288.66px;top:326.00px;font:normal 8.6px/8.6px 'Liberation Sans',serif;color:#303030;white-space:pre;font-variant-ligatures:none;font-kerning:none;;transform:scaleX(0.8600);transform-origin:0 0">1</div>
<div style="position:absolute;left:379.21px;top:326.00px;font:normal 8.6px/8.6px 'Liberation Sans',serif;color:#303030;white-space:pre;font-variant-ligatures:none;font-kerning:none;;transform:scaleX(0.8600);transform-origin:0 0">-8,333.00</div>
<div style="position:absolute;left:415.37px;top:326.00px;font:normal 8.6px/8.6px 'Liberation Sans',serif;color:#303030;white-space:pre;font-variant-ligatures:none;font-kerning:none;;transform:scaleX(0.9080);transform-origin:0 0">3203·Deffered Income - Student</div>
<div style="position:absolute;left:614px;top:0;width:61.60000000000002px;height:468px;overflow:hidden"><div style="position:absolute;left:-614px;top:0"><div style="position:absolute;left:615.97px;top:326.00px;font:normal 8.6px/8.6px 'Liberation Sans',serif;color:#303030;white-space:pre;font-variant-ligatures:none;font-kerning:none;;transform:scaleX(0.8970);transform-origin:0 0">00·Real Estate:Main</div></div></div>
<div style="position:absolute;left:676px;top:0;width:61px;height:468px;overflow:hidden"><div style="position:absolute;left:-676px;top:0"><div style="position:absolute;left:677.38px;top:326.00px;font:normal 8.6px/8.6px 'Liberation Sans',serif;color:#303030;white-space:pre;font-variant-ligatures:none;font-kerning:none;;transform:scaleX(0.8954);transform-origin:0 0">Pretereminate Contract</div></div></div>
<div style="position:absolute;left:43.15px;top:338.00px;font:normal 8.6px/8.6px 'Liberation Sans',serif;color:#303030;white-space:pre;font-variant-ligatures:none;font-kerning:none;;transform:scaleX(0.8600);transform-origin:0 0">6</div>
<div style="position:absolute;left:77.86px;top:338.00px;font:normal 8.6px/8.6px 'Liberation Sans',serif;color:#303030;white-space:pre;font-variant-ligatures:none;font-kerning:none;;transform:scaleX(0.8600);transform-origin:0 0">11</div>
<div style="position:absolute;left:93.82px;top:338.00px;font:normal 8.6px/8.6px 'Liberation Sans',serif;color:#303030;white-space:pre;font-variant-ligatures:none;font-kerning:none;;transform:scaleX(0.8796);transform-origin:0 0">2022</div>
<div style="position:absolute;left:119.77px;top:338.00px;font:normal 8.6px/8.6px 'Liberation Sans',serif;color:#303030;white-space:pre;font-variant-ligatures:none;font-kerning:none;;transform:scaleX(0.9006);transform-origin:0 0">01/11/2022</div>
<div style="position:absolute;left:177.27px;top:338.00px;font:normal 8.6px/8.6px 'Liberation Sans',serif;color:#303030;white-space:pre;font-variant-ligatures:none;font-kerning:none;;transform:scaleX(0.9102);transform-origin:0 0">30/11/2022</div>
<div style="position:absolute;left:288.66px;top:338.00px;font:normal 8.6px/8.6px 'Liberation Sans',serif;color:#303030;white-space:pre;font-variant-ligatures:none;font-kerning:none;;transform:scaleX(0.8600);transform-origin:0 0">1</div>
<div style="position:absolute;left:379.21px;top:338.00px;font:normal 8.6px/8.6px 'Liberation Sans',serif;color:#303030;white-space:pre;font-variant-ligatures:none;font-kerning:none;;transform:scaleX(0.8600);transform-origin:0 0">-8,337.00</div>
<div style="position:absolute;left:415.37px;top:338.00px;font:normal 8.6px/8.6px 'Liberation Sans',serif;color:#303030;white-space:pre;font-variant-ligatures:none;font-kerning:none;;transform:scaleX(0.9080);transform-origin:0 0">3203·Deffered Income - Student</div>
<div style="position:absolute;left:614px;top:0;width:61.60000000000002px;height:468px;overflow:hidden"><div style="position:absolute;left:-614px;top:0"><div style="position:absolute;left:615.97px;top:338.00px;font:normal 8.6px/8.6px 'Liberation Sans',serif;color:#303030;white-space:pre;font-variant-ligatures:none;font-kerning:none;;transform:scaleX(0.8970);transform-origin:0 0">00·Real Estate:Main</div></div></div>
<div style="position:absolute;left:676px;top:0;width:61px;height:468px;overflow:hidden"><div style="position:absolute;left:-676px;top:0"><div style="position:absolute;left:677.38px;top:338.00px;font:normal 8.6px/8.6px 'Liberation Sans',serif;color:#303030;white-space:pre;font-variant-ligatures:none;font-kerning:none;;transform:scaleX(0.8954);transform-origin:0 0">Pretereminate Contract</div></div></div>
<div style="position:absolute;left:375.51px;top:351.00px;font:normal 8.6px/8.6px 'Liberation Sans',serif;color:#383838;white-space:pre;font-variant-ligatures:none;font-kerning:none;;transform:scaleX(0.8501);transform-origin:0 0">-49,340.00</div>
<div style="position:absolute;left:90.99px;top:363.00px;font:bold 10.2px/10.2px 'Liberation Serif',serif;color:#101010;white-space:pre;font-variant-ligatures:none;font-kerning:none;;transform:scaleX(1.0445);transform-origin:0 0">Total</div>
<div style="position:absolute;left:288.85px;top:363.00px;font:bold 10.2px/10.2px 'Liberation Serif',serif;color:#101010;white-space:pre;font-variant-ligatures:none;font-kerning:none;;transform:scaleX(0.9500);transform-origin:0 0">5</div>
<div style="position:absolute;left:321.10px;top:363.00px;font:bold 10.2px/10.2px 'Liberation Serif',serif;color:#101010;white-space:pre;font-variant-ligatures:none;font-kerning:none;;transform:scaleX(0.9500);transform-origin:0 0">28</div>
<div style="position:absolute;left:363.42px;top:363.00px;font:bold 10.2px/10.2px 'Liberation Serif',serif;color:#101010;white-space:pre;font-variant-ligatures:none;font-kerning:none;;transform:scaleX(1.0657);transform-origin:0 0">-49,340.00</div>
<div style="position:absolute;left:25.00px;top:446.00px;font:normal 8.6px/8.6px 'Liberation Sans',serif;color:#202020;white-space:pre;font-variant-ligatures:none;font-kerning:none;;transform:scaleX(0.8904);transform-origin:0 0">Attachment</div>
<div style="position:absolute;left:93.82px;top:448.00px;font:normal 8.6px/8.6px 'Liberation Sans',serif;color:#2424ff;white-space:pre;font-variant-ligatures:none;font-kerning:none;-webkit-text-stroke:0.12px #2424ff;;transform:scaleX(0.8434);transform-origin:0 0">Press F2 For Quick Add</div>
<div style="position:absolute;left:187.50px;top:446.00px;font:normal 11px/11px 'Liberation Serif',serif;color:#ff2222;white-space:pre;font-variant-ligatures:none;font-kerning:none;-webkit-text-stroke:0.2px #ff2222;transform:scaleX(0.9145);transform-origin:0 0">Press Ctrl+Y to view Journal</div>
<div style="position:absolute;left:428.81px;top:445.00px;font:normal 8.6px/8.6px 'Liberation Sans',serif;color:#202020;white-space:pre;font-variant-ligatures:none;font-kerning:none;;transform:scaleX(0.8397);transform-origin:0 0">Save &amp; Close</div>
<div style="position:absolute;left:496.71px;top:445.00px;font:normal 8.6px/8.6px 'Liberation Sans',serif;color:#202020;white-space:pre;font-variant-ligatures:none;font-kerning:none;;transform:scaleX(0.8545);transform-origin:0 0">Save &amp; New</div>
<div style="position:absolute;left:558.71px;top:445.00px;font:normal 8.6px/8.6px 'Liberation Sans',serif;color:#202020;white-space:pre;font-variant-ligatures:none;font-kerning:none;;transform:scaleX(0.8346);transform-origin:0 0">Save &amp; Print JV</div>
<div style="position:absolute;left:642.33px;top:445.00px;font:normal 8.6px/8.6px 'Liberation Sans',serif;color:#202020;white-space:pre;font-variant-ligatures:none;font-kerning:none;;transform:scaleX(0.8546);transform-origin:0 0">Clear</div>
<div style="position:absolute;left:702.63px;top:445.00px;font:normal 8.6px/8.6px 'Liberation Sans',serif;color:#202020;white-space:pre;font-variant-ligatures:none;font-kerning:none;;transform:scaleX(0.8524);transform-origin:0 0">Close(F10)</div>
</div>
</body></html>
